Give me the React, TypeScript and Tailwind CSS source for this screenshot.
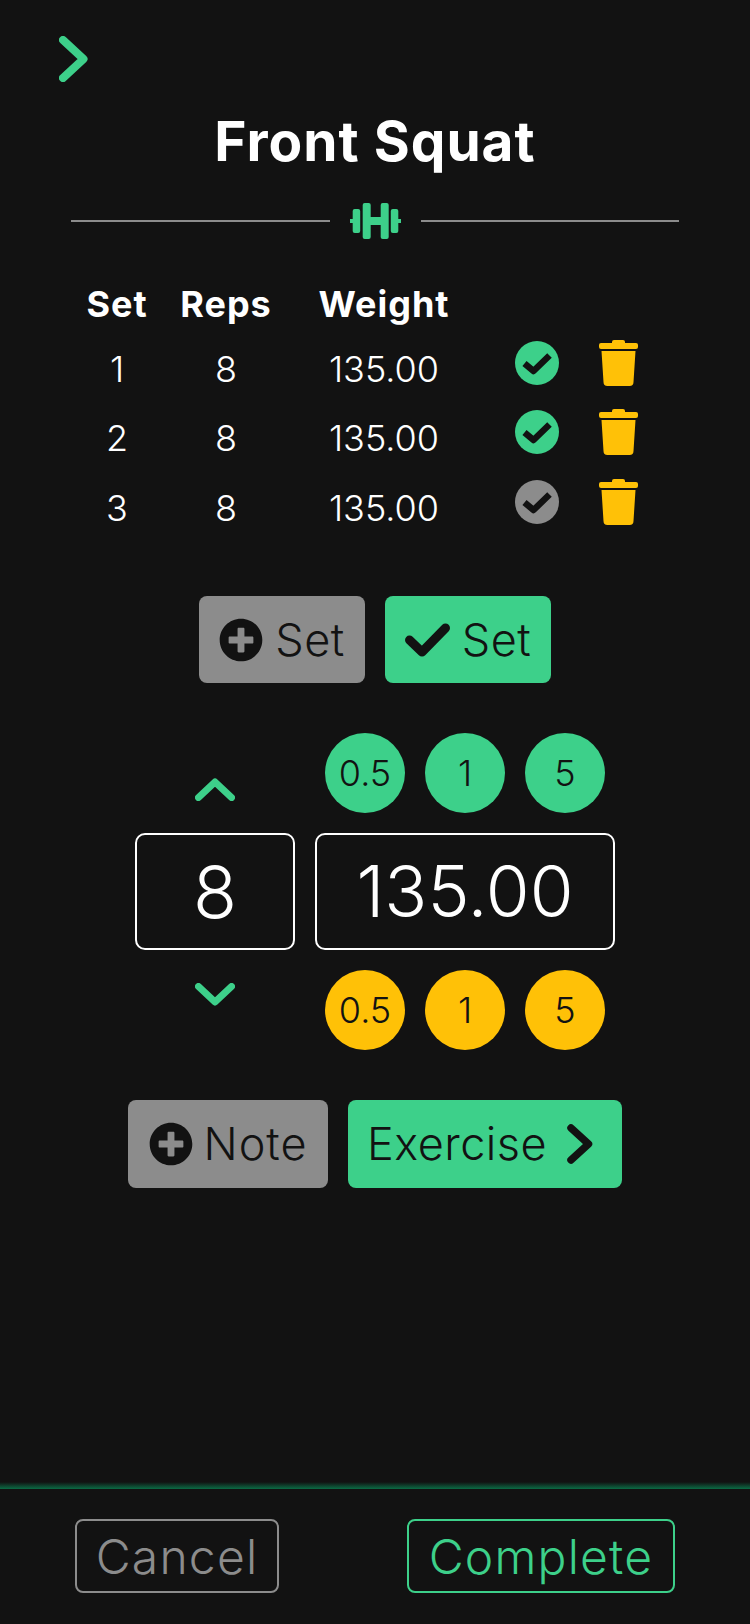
import { FaPlusCircle } from "react-icons/fa";

const sets = [
  { n: 1, done: true },
  { n: 2, done: true },
  { n: 3, done: false },
];

function CheckBadge({ done }: { done: boolean }) {
  return (
    <svg width="44" height="44" viewBox="0 0 44 44">
      <circle cx="22" cy="22" r="22" fill={done ? "#3dd08a" : "#8c8c8c"} />
      <path d="M9.500 22.500L18.500 30 34.500 14.500" fill="none" stroke="#121212" strokeWidth="6.500" strokeLinejoin="round" />
    </svg>
  );
}

function Trash() {
  return (
    <svg width="39" height="46" viewBox="0 0 39 46" fill="#ffc107">
      <path d="M13 2q0-2 2-2h9q2 0 2 2v1h11q2 0 2 2v2q0 2-2 2H2q-2 0-2-2V5q0-2 2-2h11z" />
      <path d="M2.500 11h34l-2 31q0 4-4 4H8.500q-4 0-4-4z" />
    </svg>
  );
}

function Dumbbell() {
  return (
    <svg width="51" height="36" viewBox="0 0 51 36" fill="#3dd08a">
      <rect x="0" y="16" width="4" height="4" />
      <rect x="2.700" y="6" width="7.500" height="24" rx="2" />
      <rect x="12.700" y="0" width="8" height="36" rx="2" />
      <rect x="20" y="14" width="11" height="8" />
      <rect x="30.700" y="0" width="8" height="36" rx="2" />
      <rect x="40.800" y="6" width="7.500" height="24" rx="2" />
      <rect x="47" y="16" width="4" height="4" />
    </svg>
  );
}

function Chevron({ dir, className }: { dir: "up" | "down"; className?: string }) {
  return (
    <svg width="40" height="24" viewBox="0 0 40 24" className={className}>
      <path
        d={dir === "up" ? "M3.500 20.500L20 5l16.500 15.500" : "M3.500 3.500L20 19 36.500 3.500"}
        fill="none"
        stroke="#3dd08a"
        strokeWidth="7"
        strokeLinecap="round"
        strokeLinejoin="round"
      />
    </svg>
  );
}

function StepCircle({ label, color }: { label: string; color: string }) {
  return (
    <button className={`flex h-20 w-20 items-center justify-center rounded-full text-[36px] font-light text-[#121212] ${color}`}>
      {label}
    </button>
  );
}

export default function App() {
  return (
    <div className="flex h-[1624px] w-[750px] flex-col bg-[#121212] font-['Inter','Liberation_Sans',sans-serif] text-white">
      <main className="flex flex-1 flex-col">
        <div className="pl-[59px] pt-[36px]">
          <svg width="29" height="46" viewBox="0 0 29 46">
            <path d="M4 4L24.500 23 4 42" fill="none" stroke="#3dd08a" strokeWidth="8" strokeLinecap="round" strokeLinejoin="round" />
          </svg>
        </div>

        <h1 className="mt-[29px] h-[60px] text-center text-[55px] font-bold leading-[60px] tracking-[1px]">Front Squat</h1>

        <div className="mt-[32px] flex h-9 items-center justify-center px-[71px]">
          <div className="h-[2px] flex-1 bg-[#8c8c8c]" />
          <div className="mx-5"><Dumbbell /></div>
          <div className="h-[2px] flex-1 bg-[#8c8c8c]" />
        </div>

        <div className="ml-[67px] mt-[41px] grid grid-cols-[100px_118px_198px_108px_54px] text-center text-[36px]">
          <div className="mb-[6px] h-12 font-bold leading-[48px] tracking-[1px]">Set</div>
          <div className="mb-[6px] h-12 font-bold leading-[48px] tracking-[1px]">Reps</div>
          <div className="mb-[6px] h-12 font-bold leading-[48px] tracking-[1px]">Weight</div>
          <div />
          <div />
          {sets.map((s) => (
            <div key={s.n} className="contents">
              <div className="flex h-[69.500px] items-center justify-center font-light">{s.n}</div>
              <div className="flex h-[69.500px] items-center justify-center font-light">8</div>
              <div className="flex h-[69.500px] items-center justify-center font-light">135.00</div>
              <div className="flex h-[69.500px] items-center justify-center pb-[12px]"><CheckBadge done={s.done} /></div>
              <div className="flex h-[69.500px] items-center justify-center pb-[12px]"><Trash /></div>
            </div>
          ))}
        </div>

        <div className="mt-[53.500px] flex justify-center gap-5">
          <button className="flex h-[87px] w-[166px] items-center justify-center gap-[12px] rounded-lg bg-[#8c8c8c] text-[45px] font-light tracking-[0.5px] text-[#121212]">
            <FaPlusCircle size={44} />
            Set
          </button>
          <button className="flex h-[87px] w-[166px] items-center justify-center gap-[12px] rounded-lg bg-[#3dd08a] text-[45px] font-light tracking-[0.5px] text-[#121212]">
            <svg width="45" height="34" viewBox="0 0 45 34">
              <path d="M4.500 17L17 29 40.500 5" fill="none" stroke="#121212" strokeWidth="9" strokeLinejoin="round" strokeLinecap="round" />
            </svg>
            Set
          </button>
        </div>

        <div className="mt-[50px] grid grid-cols-[160px_300px] justify-center gap-5">
          <Chevron dir="up" className="mb-[12px] self-end justify-self-center" />
          <div className="flex justify-center gap-5">
            <StepCircle label="0.5" color="bg-[#3dd08a]" />
            <StepCircle label="1" color="bg-[#3dd08a]" />
            <StepCircle label="5" color="bg-[#3dd08a]" />
          </div>
          <div className="flex h-[117px] items-center justify-center rounded-[10px] border-2 border-white text-[72px] font-light">8</div>
          <div className="flex h-[117px] items-center justify-center rounded-[10px] border-2 border-white text-[71px] font-light">135.00</div>
          <Chevron dir="down" className="mt-[13px] self-start justify-self-center" />
          <div className="flex justify-center gap-5">
            <StepCircle label="0.5" color="bg-[#ffc107]" />
            <StepCircle label="1" color="bg-[#ffc107]" />
            <StepCircle label="5" color="bg-[#ffc107]" />
          </div>
        </div>

        <div className="mt-[50px] flex justify-center gap-5">
          <button className="flex h-[88px] w-[200px] items-center justify-center gap-[11px] rounded-lg bg-[#8c8c8c] text-[45px] font-light tracking-[1px] text-[#121212]">
            <FaPlusCircle size={44} />
            Note
          </button>
          <button className="flex h-[88px] w-[274px] items-center justify-start gap-5 rounded-lg bg-[#3dd08a] pl-[19px] text-[45px] font-light tracking-[0.5px] text-[#121212]">
            Exercise
            <svg width="26" height="40" viewBox="0 0 26 40">
              <path d="M4 4L21.500 20 4 36" fill="none" stroke="#121212" strokeWidth="7.500" strokeLinecap="round" strokeLinejoin="round" />
            </svg>
          </button>
        </div>
      </main>

      <div className="h-[7px] bg-gradient-to-b from-transparent to-[#0b6b45]" />
      <footer className="flex h-[135px] justify-between px-[75px] pt-[30px]">
        <button className="h-[74px] w-[204px] rounded-lg border-2 border-[#8c8c8c] text-[48px] font-light tracking-[1.200px] text-[#8c8c8c]">Cancel</button>
        <button className="h-[74px] w-[268px] rounded-lg border-2 border-[#3dd08a] text-[48px] font-light tracking-[1.200px] text-[#3dd08a]">Complete</button>
      </footer>
    </div>
  );
}
